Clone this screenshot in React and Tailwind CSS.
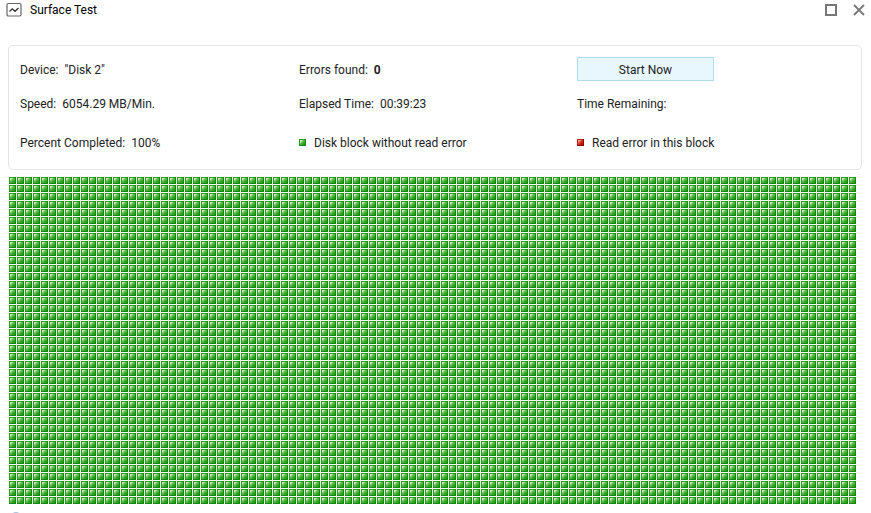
import React from 'react';

const COLUMNS = 106;
const ROWS = 41;

const blockStyles = {
  ok: 'bg-linear-to-br from-[#dcf7cc] from-10% via-[#4db63a] via-50% to-[#078a06] border-t-[#259c1a] border-l-[#259c1a] border-r-[#0a8a0c] border-b-[#0a8a0c]',
  error: 'bg-linear-to-br from-[#f9b5aa] from-10% via-[#d8281a] via-50% to-[#a00c06] border-t-[#b81c12] border-l-[#b81c12] border-r-[#8c0804] border-b-[#8c0804]'
};

const blocks = Array.from({ length: COLUMNS * ROWS }, (_, index) => ({ id: index, status: 'ok' }));

const Block = ({ status }) => (
  <span className={`block h-[7px] w-[7px] shrink-0 border ${blockStyles[status]}`} />
);

const Field = ({ label, children }) => (
  <div className="flex items-center gap-[6px] pt-0.5 whitespace-nowrap">
    <dt>{label}</dt>
    <dd>{children}</dd>
  </div>
);

const Legend = ({ status, children }) => (
  <div className="flex items-center gap-2 whitespace-nowrap">
    <Block status={status} />
    <span className="pt-0.5">{children}</span>
  </div>
);

const TitleBar = () => (
  <header className="flex h-5 items-center justify-between px-[6px]">
    <div className="flex items-center gap-2">
      <svg className="h-4 w-4" viewBox="0 0 16 16" fill="none" stroke="#666">
        <rect x="1" y="1.5" width="14" height="12.5" rx="1.2" strokeWidth="1.2" />
        <path d="M3.5 9.5 6.3 6.8 9 9.3 12.5 6" stroke="#333" strokeWidth="1.3" />
      </svg>
      <h1 className="text-black">Surface Test</h1>
    </div>
    <div className="flex items-center gap-4">
      <button type="button" aria-label="Maximize">
        <svg className="h-3 w-3" viewBox="0 0 12 12" fill="none" stroke="#777" strokeWidth="2">
          <rect x="1" y="1" width="10" height="10" />
        </svg>
      </button>
      <button type="button" aria-label="Close">
        <svg className="h-3 w-3" viewBox="0 0 12 12" fill="none" stroke="#777" strokeWidth="1.8">
          <path d="M1 1 11 11M11 1 1 11" />
        </svg>
      </button>
    </div>
  </header>
);

const App = () => {
  return (
    <div className="h-screen overflow-hidden bg-white font-['Roboto','Noto_Sans',sans-serif] text-[12px] leading-5 text-[#222]">
      <TitleBar />

      <main className="mt-[25px] pl-2 pr-[9px]">
        {/* Test summary */}
        <section className="h-[125px] rounded-[5px] border border-[#e5e5e5] px-[11px] pt-[11px]">
          <div className="grid grid-cols-[279px_278px_1fr] grid-rows-[24px_44px_34px] items-center">
            <dl className="contents">
              <Field label="Device:">"Disk 2"</Field>
              <Field label="Errors found:">
                <strong className="font-bold">0</strong>
              </Field>
            </dl>
            <button
              type="button"
              className="h-6 w-[137px] border border-[#b3dcec] bg-[#e8f6fe] pt-0.5 text-center leading-5"
            >
              Start Now
            </button>
            <dl className="contents">
              <Field label="Speed:">6054.29 MB/Min.</Field>
              <Field label="Elapsed Time:">00:39:23</Field>
              <Field label="Time Remaining:" />
              <Field label="Percent Completed:">100%</Field>
            </dl>
            <Legend status="ok">Disk block without read error</Legend>
            <Legend status="error">Read error in this block</Legend>
          </div>
        </section>

        {/* Block map */}
        <section
          aria-label="Disk blocks"
          className="mt-[7px] grid grid-cols-[repeat(auto-fill,7px)] gap-px pl-px"
        >
          {blocks.map((block) => (
            <Block key={block.id} status={block.status} />
          ))}
        </section>
      </main>

      <footer className="px-3 pt-2">
        <div className="h-2 w-2 rounded-full bg-[#a9bfe0]" />
      </footer>
    </div>
  );
};

export default App;
